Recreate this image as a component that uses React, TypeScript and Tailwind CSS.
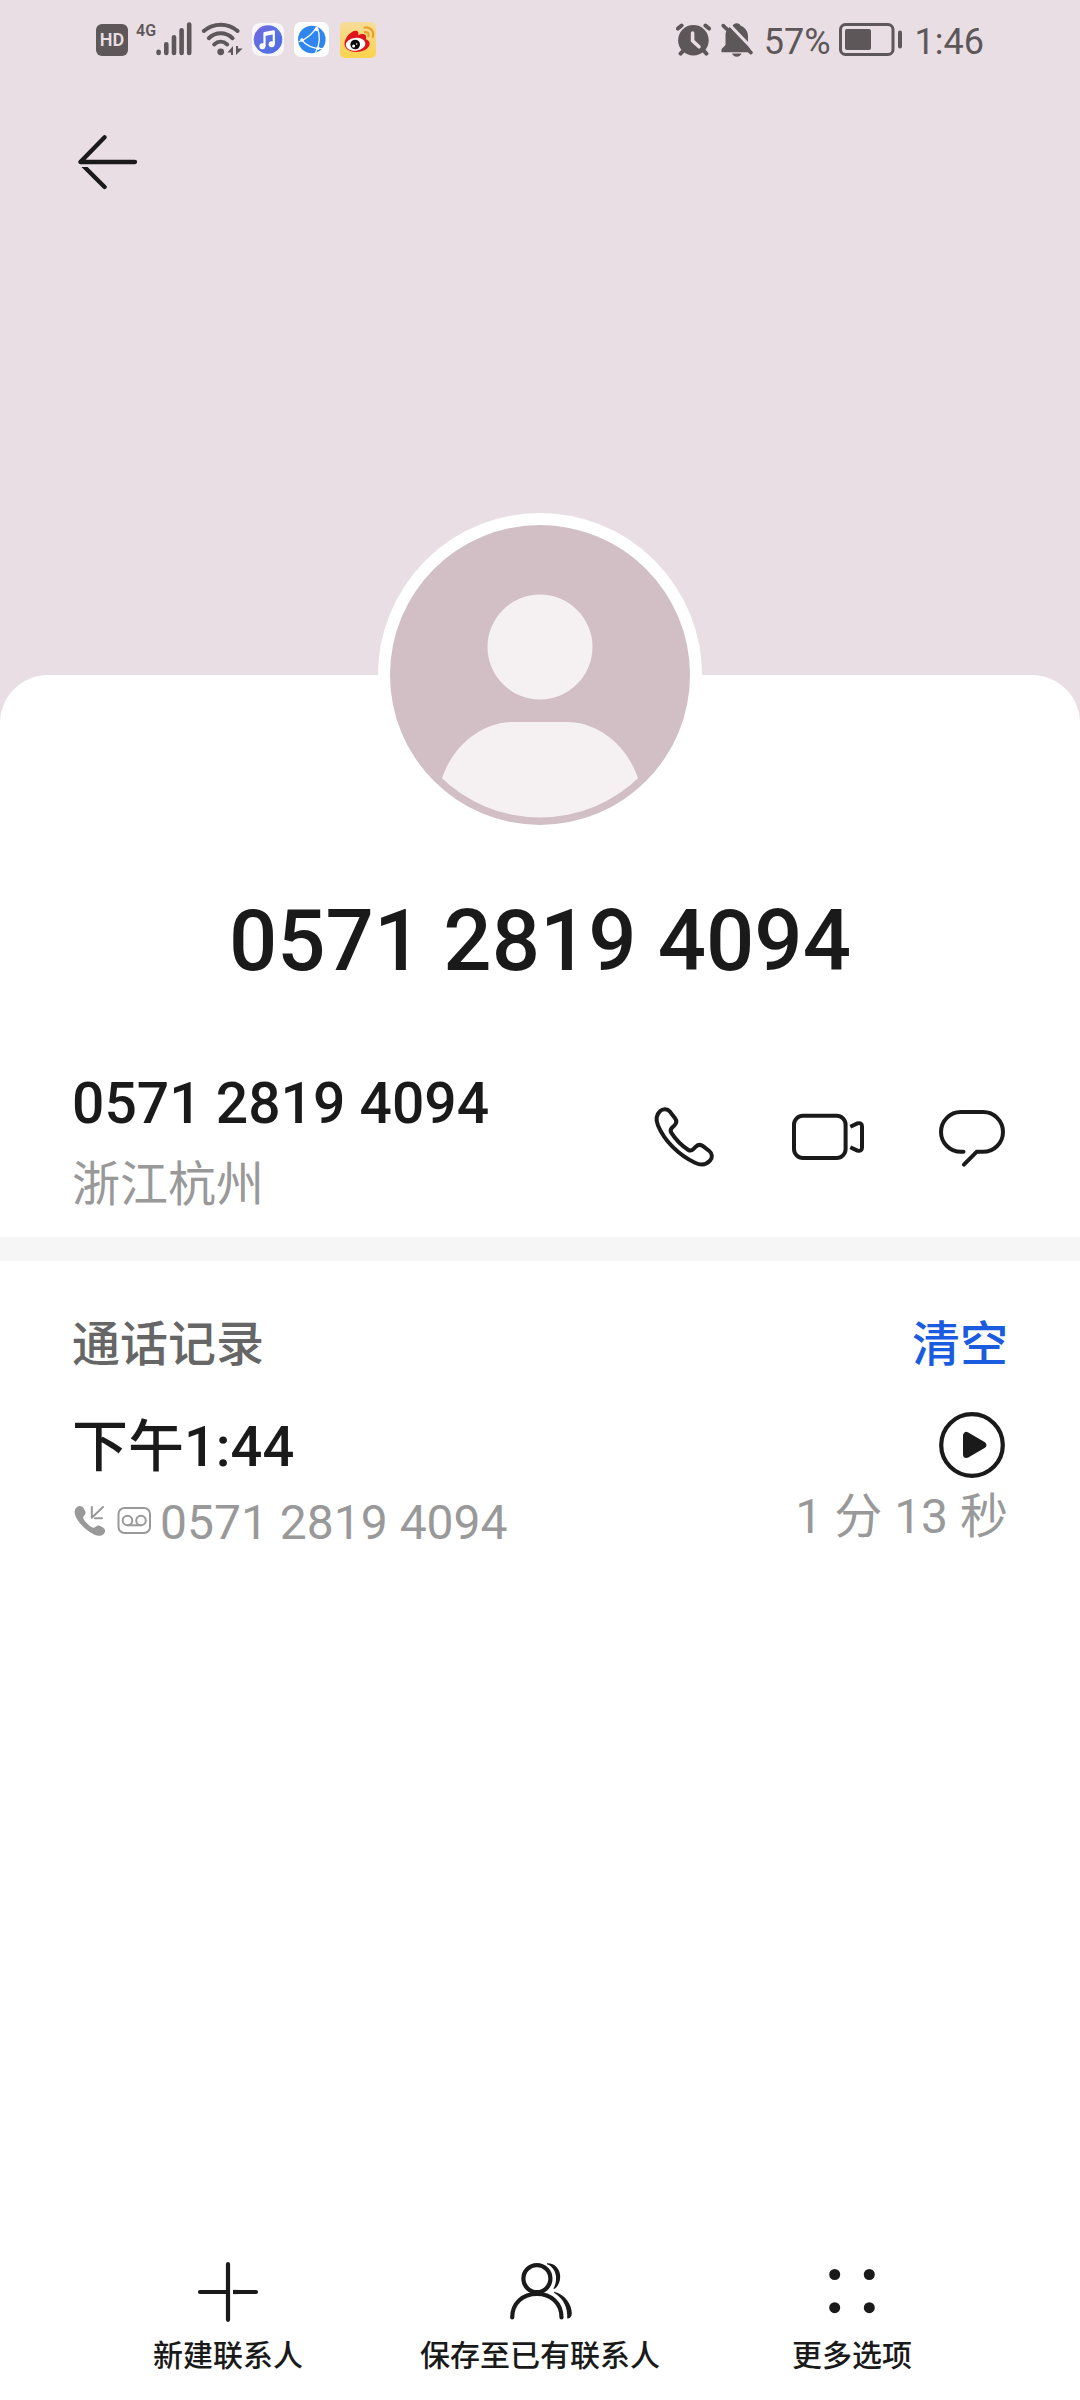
import type { ReactNode } from 'react';

interface IconProps {
  className?: string;
}

interface ActionButtonProps {
  label: string;
  children: ReactNode;
}

/* ---------- Status bar icons ---------- */

function SignalIcon() {
  return (
    <svg className="w-9 h-9" viewBox="0 0 36 36" stroke="#5d5759" strokeWidth="4.6" strokeLinecap="round" aria-hidden="true">
      <path d="M2.6 29.8V31M10.3 22.3V31M18 15.3V31M25.6 8.3V31M33.2 2.6V31" />
    </svg>
  );
}

function WifiIcon() {
  return (
    <svg className="w-11 h-9" viewBox="0 0 44 36" fill="none" stroke="#5d5759" strokeWidth="4" strokeLinecap="round" aria-hidden="true">
      <path d="M3.8 9C13.5 .8 28 .8 37.6 9" />
      <path d="M8.8 16.2c6.8-6.6 17-6.6 23.8 0" />
      <path d="M14.2 22.4c4-3.6 9-3.6 13 0" />
      <circle cx="20.7" cy="29.8" r="3.4" fill="#5d5759" stroke="none" />
      <path d="M27.5 30.6L33 24v9h-2v-2.4zM36 33v-9h2v2.6h4.6z" fill="#5d5759" stroke="none" />
    </svg>
  );
}

function MusicAppIcon() {
  return (
    <svg className="w-8 h-9" viewBox="0 0 32 36" aria-hidden="true">
      <defs>
        <linearGradient id="music" x1="0" y1="0" x2="1" y2="1">
          <stop offset="0" stopColor="#7a62dd" />
          <stop offset=".5" stopColor="#5873e2" />
          <stop offset="1" stopColor="#4f6be6" />
        </linearGradient>
      </defs>
      <rect y="1" width="32" height="33" rx="8" fill="#f8f6fb" />
      <circle cx="16" cy="17.5" r="14.3" fill="url(#music)" />
      <path d="M12.5 24V11.2l9.3-1.8V22" fill="none" stroke="#fff" strokeWidth="2.2" strokeLinejoin="round" />
      <path d="M12.5 13l9.3-1.8" stroke="#fff" strokeWidth="2" />
      <circle cx="10.4" cy="24.2" r="3" fill="#fff" />
      <circle cx="19.7" cy="22.2" r="3" fill="#fff" />
    </svg>
  );
}

function BrowserAppIcon() {
  return (
    <svg className="w-9 h-9" viewBox="0 0 36 36" aria-hidden="true">
      <rect width="35" height="35" rx="7" fill="#fff" />
      <circle cx="17.8" cy="17.5" r="13.8" fill="#2f86ee" />
      <g fill="none" stroke="#fff" strokeWidth="1.3">
        <path d="M4.5 20C12 17 19 12 22.5 5M7 16.8C12 24 19 27 30 26.5M23 5c3.5 8 3 17-1.5 26" />
      </g>
      <circle cx="8" cy="18" r="1.8" fill="#fff" />
      <circle cx="22.6" cy="7.4" r="1.8" fill="#fff" />
      <circle cx="24" cy="26.2" r="1.8" fill="#fff" />
    </svg>
  );
}

function WeiboAppIcon() {
  return (
    <svg className="w-9 h-9" viewBox="0 0 36 36" aria-hidden="true">
      <defs>
        <linearGradient id="weibo" x1="0" y1="0" x2="0" y2="1">
          <stop offset="0" stopColor="#f6dc9a" />
          <stop offset="1" stopColor="#fbd34c" />
        </linearGradient>
      </defs>
      <rect width="36" height="36" rx="5" fill="url(#weibo)" />
      <path d="M4.5 22.5C4 17 10.500 8.500 16 8.800c2.600.2 2.800 2.400 2 4.400 3-1.400 8-2 8.200 1.800.1 1-.6 1.800-.3 2.200 5 1.600 4.600 6.300 1.200 9.200C20.500 32 5.500 31 4.500 22.500z" fill="#e0141c" />
      <ellipse cx="15.600" cy="22.300" rx="9.800" ry="6.400" fill="#fff" transform="rotate(-6 15.600 22.300)" />
      <circle cx="15.200" cy="22.500" r="4.800" fill="#0c0c0c" />
      <circle cx="13.600" cy="24" r="1.500" fill="#fff" />
      <circle cx="16.600" cy="22" r=".8" fill="#fff" />
      <path d="M24.500 5.500c6-1 10 4 8.200 9.500M24.800 10.200c2.800-.6 4.400 1.400 3.600 4" fill="none" stroke="#e7a02c" strokeWidth="2.2" strokeLinecap="round" />
    </svg>
  );
}

function AlarmIcon() {
  return (
    <svg className="w-9 h-9" viewBox="0 0 36 36" fill="none" stroke="#5d5759" strokeWidth="4" strokeLinecap="round" aria-hidden="true">
      <circle cx="17.4" cy="18.3" r="15.3" fill="#5d5759" stroke="none" />
      <path d="M2 6.6L5.6 3.5M29.4 3.5L33 6.6M7 29l-2.4 2.6M28 29l2.4 2.6" />
      <path d="M16.6 11v7.8l6.4 6" stroke="#e8dee3" strokeWidth="3.6" />
    </svg>
  );
}

function BellOffIcon() {
  return (
    <svg className="w-9 h-9" viewBox="0 0 36 36" aria-hidden="true">
      <path
        d="M16.7 1.2c2 0 3.4 1 4 2.6 4.8 1.8 7.3 5.8 7.3 10.8v7.6l3.5 8.1H1.5v-3l4-4.2v-9.5c0-5 2.5-8 7.2-9.8.6-1.6 2-2.6 4-2.6zM12 31.6h9.6c-.8 2-2.500 3.200-4.800 3.200s-4-1.200-4.800-3.200z"
        fill="#5d5759"
      />
      <path d="M5.6-1.4L34 28.3" stroke="#e8dee3" strokeWidth="3" />
      <path d="M3.2 3.6L31 30.600" stroke="#5d5759" strokeWidth="3.6" strokeLinecap="round" />
    </svg>
  );
}

function BatteryIcon() {
  return (
    <svg className="w-16 h-9" viewBox="0 0 64 36" aria-hidden="true">
      <rect x="1.5" y="2.5" width="52.5" height="30" rx="5" fill="none" stroke="#5d5759" strokeWidth="3" />
      <rect x="6" y="7" width="26" height="21" rx="2" fill="#5d5759" />
      <rect x="59" y="8.5" width="4" height="18" rx="2" fill="#5d5759" />
    </svg>
  );
}

/* ---------- Page icons ---------- */

function BackIcon() {
  return (
    <svg className="w-[72px] h-[72px]" viewBox="0 0 72 72" fill="none" stroke="#1a1a1a" strokeWidth="4.3" strokeLinecap="round" strokeLinejoin="round" aria-hidden="true">
      <clipPath id="back-tail">
        <rect y="41" width="72" height="31" />
      </clipPath>
      <path d="M32.6 11.2L8.4 36H63" />
      <path d="M10 38.5L32.6 61" clipPath="url(#back-tail)" />
    </svg>
  );
}

function Avatar() {
  return (
    <svg className="w-[300px] h-[300px]" viewBox="0 0 300 300" aria-hidden="true">
      <clipPath id="avatar-inner">
        <circle cx="150" cy="150.5" r="142" />
      </clipPath>
      <circle cx="150" cy="150" r="150" fill="#d1bfc5" />
      <circle cx="150" cy="122" r="52.5" fill="#f5f1f3" />
      <path d="M50 260C60 221 92 197 123 197h54c31 0 63 24 73 63v40H50z" fill="#f5f1f3" clipPath="url(#avatar-inner)" />
    </svg>
  );
}

function PhoneIcon() {
  return (
    <svg className="w-[72px] h-[72px]" viewBox="0 0 72 72" fill="none" stroke="#1a1a1a" strokeWidth="4" strokeLinejoin="round" aria-hidden="true">
      <path d="M12 10.2C15 7.2 19.5 7.6 21.8 10.5L27 17.2C28.9 19.7 28.6 22.2 26.5 24.3L24 26.7C22.4 28.3 22.2 30 23.4 31.9C27.5 38.3 34 44.8 40 48.7C41.9 49.9 43.8 49.7 45.3 48.2L47.8 45.7C50 43.6 52.5 43.3 55 45.2L61.3 50C64.4 52.4 64.7 56.8 62 59.7C58.5 63.6 53 64.5 47 61.7C31 54.5 16.5 40 10 24.5C7.6 18.7 8.3 13.7 12 10.2Z" />
    </svg>
  );
}

function VideoIcon() {
  return (
    <svg className="w-[72px] h-[72px]" viewBox="0 0 72 72" fill="none" stroke="#1a1a1a" strokeWidth="4" strokeLinejoin="round" aria-hidden="true">
      <rect x="2" y="14.8" width="51.6" height="42.2" rx="9" />
      <path d="M58.3 25.8L65.4 22.4Q70 21.2 70 25.5V46.5Q70 50.8 65.4 49.6L58.3 46.2" />
    </svg>
  );
}

function MessageIcon() {
  return (
    <svg className="w-[72px] h-[72px]" viewBox="0 0 72 72" fill="none" stroke="#1a1a1a" strokeWidth="4" strokeLinecap="round" strokeLinejoin="round" aria-hidden="true">
      <path d="M27.5 50.8H24.9A19.9 19.9 0 0 1 24.9 11H47.1A19.9 19.9 0 0 1 47.1 50.8H40.6L27.9 63.6" />
    </svg>
  );
}

function PlayIcon() {
  return (
    <svg className="w-[66px] h-[66px]" viewBox="0 0 66 66" stroke="#1a1a1a" strokeLinejoin="round" aria-hidden="true">
      <circle cx="33" cy="33" r="30.8" fill="none" strokeWidth="4.2" />
      <path d="M27.5 23.5V42.5L43.8 33Z" fill="#1a1a1a" strokeWidth="7" />
    </svg>
  );
}

function IncomingCallIcon({ className }: IconProps) {
  return (
    <svg className={className} viewBox="0 0 36 36" aria-hidden="true">
      <path d="M4.5 4.5C6.5 2.2 10 2.5 11.6 5.2L13 7.8C14.2 10 13.5 11.3 11.8 13C10.8 14.2 11 15.3 12 16.8C14 19.7 16.5 22.2 19.3 24C20.8 25 22 25.1 23.2 24C24.8 22.6 26.2 21.8 28.2 23L31 24.6C33.5 26.2 33.8 28.7 31.7 30.9C29.5 33.2 26 33.5 22 31.5C13.5 27 7 20.5 3.7 13.5C2 9.8 2.2 7 4.5 4.5Z" fill="#999" />
      <path d="M19.8 4V14.8M19.8 14.8L31 4M23 15.3H30" fill="none" stroke="#999" strokeWidth="2" strokeLinecap="round" />
    </svg>
  );
}

function VoicemailIcon({ className }: IconProps) {
  return (
    <svg className={className} viewBox="0 0 36 36" fill="none" stroke="#999" strokeWidth="2" aria-hidden="true">
      <rect x="2.5" y="5" width="31.5" height="25" rx="6" />
      <circle cx="11.5" cy="17.5" r="4.8" />
      <circle cx="25" cy="17.5" r="4.8" />
      <path d="M11.5 22.3H25" />
    </svg>
  );
}

function PlusIcon() {
  return (
    <svg className="w-[72px] h-[72px]" viewBox="0 0 72 72" stroke="#1a1a1a" strokeWidth="4.2" strokeLinecap="round" aria-hidden="true">
      <path d="M36 8.2V63.8M8 36H36M44 36H64" />
      <path d="M41 36H46" strokeLinecap="butt" />
    </svg>
  );
}

function ContactsIcon() {
  return (
    <svg className="w-[72px] h-[72px]" viewBox="0 0 72 72" fill="none" stroke="#1a1a1a" strokeWidth="4.2" strokeLinecap="round" aria-hidden="true">
      <circle cx="32.9" cy="22.6" r="13.5" />
      <path d="M8.2 61.5C8.2 47 19 37.8 32.9 37.8S57.5 47 57.5 61.5" />
      <g fill="#1a1a1a" stroke="none">
        <path d="M43 7.3C51 7 56.2 13.5 56.2 20.5C56.2 26.5 53.5 31.2 50.3 33C49.6 33.3 49.3 32.6 49.7 32C51.5 28.8 52.3 25 52 20.5C51.5 15 48 10 43 8.3Z" />
        <path d="M50 35.8C61 38 68 49 67.8 57.5C67.6 60.8 66 62.6 63.2 62.5C64 52 59.5 42.5 50 36.8Z" />
      </g>
    </svg>
  );
}

function MoreIcon() {
  return (
    <svg className="w-[72px] h-[72px]" viewBox="0 0 72 72" fill="#1a1a1a" aria-hidden="true">
      <circle cx="18.7" cy="18.5" r="5.5" />
      <circle cx="53.3" cy="18.5" r="5.5" />
      <circle cx="18.7" cy="51.7" r="5.5" />
      <circle cx="53.3" cy="51.7" r="5.5" />
    </svg>
  );
}

/* ---------- Sections ---------- */

function StatusBar() {
  return (
    <div className="flex items-center justify-between h-20 px-24 text-[#5d5759]">
      <div className="flex items-center gap-2">
        <span className="flex items-center justify-center w-8 h-8 rounded-md bg-[#5d5759] text-[#e8dee3] text-[18px] leading-none font-semibold">
          HD
        </span>
        <div className="flex items-start">
          <span className="w-5 text-[16px] leading-[18px] font-semibold">4G</span>
          <SignalIcon />
        </div>
        <WifiIcon />
        <div className="flex items-center gap-[10px]">
          <MusicAppIcon />
          <BrowserAppIcon />
          <WeiboAppIcon />
        </div>
      </div>
      <div className="flex items-center gap-2">
        <AlarmIcon />
        <BellOffIcon />
        <span className="pt-[3px] text-[36px] leading-10">57%</span>
        <BatteryIcon />
        <span className="pt-[3px] pl-1 text-[36px] leading-10">1:46</span>
      </div>
    </div>
  );
}

function ActionButton({ label, children }: ActionButtonProps) {
  return (
    <button type="button" className="flex flex-1 flex-col items-center gap-[6px]">
      {children}
      <span className="text-[30px] leading-[44px] font-medium whitespace-nowrap">{label}</span>
    </button>
  );
}

function App() {
  const number = '0571 2819 4094';

  return (
    <div
      lang="zh-CN"
      className="flex flex-col min-h-screen bg-[#e8dee3] text-[#1a1a1a] font-[Roboto,'Noto_Sans_CJK_SC',sans-serif]"
    >
      {/* Header */}
      <header className="pb-[477px]">
        <StatusBar />
        <button type="button" aria-label="返回" className="block ml-[72px] mt-[46px]">
          <BackIcon />
        </button>
      </header>

      {/* Contact sheet */}
      <main className="flex flex-1 flex-col rounded-t-[48px] bg-white">
        <div className="mx-auto -mt-[162px] rounded-full border-12 border-white bg-white">
          <Avatar />
        </div>
        <h1 className="mt-[54px] text-center text-[85px] leading-[100px] font-medium">{number}</h1>

        {/* Number + quick actions */}
        <section className="flex items-center justify-between mt-[78px] px-[72px] pb-[18px]">
          <div className="flex flex-col gap-3">
            <p className="text-[57px] leading-[70px] font-medium">{number}</p>
            <p className="text-[48px] leading-[68px] text-[#999]">浙江杭州</p>
          </div>
          <div className="flex gap-[72px] pb-[14px]">
            <button type="button" aria-label="拨打电话">
              <PhoneIcon />
            </button>
            <button type="button" aria-label="视频通话">
              <VideoIcon />
            </button>
            <button type="button" aria-label="发送信息">
              <MessageIcon />
            </button>
          </div>
        </section>

        <hr className="h-6 border-0 bg-[#f6f6f6]" />

        {/* Call log */}
        <section className="px-[72px] pt-12">
          <div className="flex items-center justify-between text-[48px] leading-[72px] font-medium">
            <h2 className="text-[#666]">通话记录</h2>
            <button type="button" className="text-[#1a5be0]">
              清空
            </button>
          </div>

          <div className="flex items-center justify-between mt-[26px]">
            <p className="pt-1 text-[56px] leading-[72px] font-medium">下午1:44</p>
            <button type="button" aria-label="播放录音" className="mr-[3px]">
              <PlayIcon />
            </button>
          </div>
          <div className="flex items-start justify-between text-[#999] text-[48px]">
            <div className="flex items-center gap-2">
              <IncomingCallIcon className="w-9 h-9" />
              <VoicemailIcon className="w-9 h-9" />
              <span className="pt-1 leading-[72px]">{number}</span>
            </div>
            <span className="leading-[68px]">1 分 13 秒</span>
          </div>
        </section>

        {/* Bottom actions */}
        <nav className="flex mt-auto px-[72px] pb-[22px]">
          <ActionButton label="新建联系人">
            <PlusIcon />
          </ActionButton>
          <ActionButton label="保存至已有联系人">
            <ContactsIcon />
          </ActionButton>
          <ActionButton label="更多选项">
            <MoreIcon />
          </ActionButton>
        </nav>
      </main>
    </div>
  );
}

export default App;
